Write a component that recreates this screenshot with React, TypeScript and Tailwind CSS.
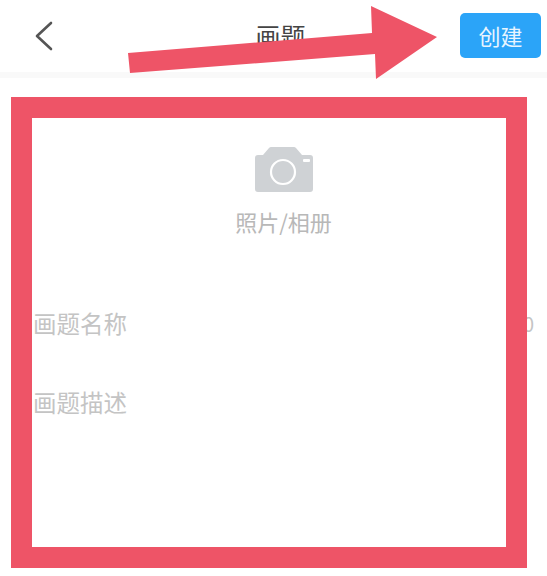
export default function App() {
  return (
    <div className="relative h-[576px] w-[547px] overflow-hidden bg-white font-['Noto_Sans_CJK_SC',sans-serif]">
      {/* Header */}
      <header className="flex h-[78px] items-center justify-between border-b-[6px] border-[#f9f9f9] pl-[35px] pr-[6px]">
        <svg width="18" height="30" viewBox="0 0 18 30" fill="none" stroke="#555555" strokeWidth="2.6" strokeLinecap="round" strokeLinejoin="round">
          <path d="M16 2 L2 15 L16 28" />
        </svg>
        <h1 className="ml-[48px] text-[25px] text-[#444444]">画题</h1>
        <button className="mt-[-2px] h-[45px] w-[81px] rounded-[5px] bg-[#2ba4f8] text-[22px] text-[#e8f5ff]">
          创建
        </button>
      </header>

      {/* Form */}
      <main className="flex flex-col">
        <div className="flex flex-col items-center pt-[69px] pl-[20px]">
          <svg width="58" height="45" viewBox="0 0 58 45">
            <path
              d="M3 8 H8 L14 1 Q15 0 16 0 H39 Q40 0 41 1 L47 8 H55 Q58 8 58 11 V42 Q58 45 55 45 H3 Q0 45 0 42 V11 Q0 8 3 8 Z"
              fill="#cfd2d5"
            />
            <circle cx="28" cy="25" r="12" fill="none" stroke="#ffffff" strokeWidth="2.2" />
            <rect x="48" y="12" width="7" height="3" rx="1" fill="#ffffff" />
          </svg>
          <span className="mt-[13px] text-[22px] leading-[32px] text-[#b8b8b8]">照片/相册</span>
        </div>
        <div className="mt-[67px] flex h-[40px] items-center justify-between pl-[33px] pr-[13px] text-[23.5px] text-[#c4c4c4]">
          <span>画题名称</span>
          <span className="text-[20px]">20</span>
        </div>
        <div className="mt-[39px] flex h-[40px] items-center pl-[33px] text-[23.5px] text-[#c4c4c4]">
          <span>画题描述</span>
        </div>
      </main>

      {/* Annotation overlays */}
      <div className="pointer-events-none absolute left-[11px] top-[97px] h-[471px] w-[516px] border-[21px] border-[#ee5467]" />
      <svg className="pointer-events-none absolute left-0 top-0" width="547" height="100" viewBox="0 0 547 100">
        <polygon points="128,53 372,33 371,6 437,37 376,79 375,54 130,73" fill="#ee5467" />
      </svg>
    </div>
  );
}
